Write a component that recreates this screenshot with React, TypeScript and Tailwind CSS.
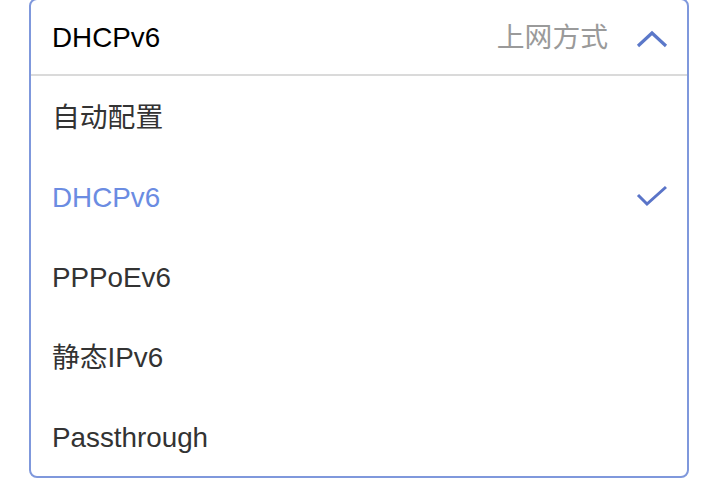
import { useState } from 'react'

const options = ['自动配置', 'DHCPv6', 'PPPoEv6', '静态IPv6', 'Passthrough']

export default function App() {
    const [selected, setSelected] = useState('DHCPv6')

    return (
        <div
            className="w-[702px] h-[484px] bg-white overflow-hidden pl-[29px]"
            style={{ fontFamily: '"Liberation Sans", Arial, "Noto Sans CJK SC", sans-serif' }}
        >
            <div className="w-[660px] -mt-[2px] border-2 border-[#7f98dc] rounded-[8px] bg-white">
                {/* 头部 */}
                <div className="h-[76px] flex items-center justify-between pl-[21px] pr-[19px] pt-[2px] border-b-2 border-[#dadada]">
                    <span className="text-[27.8px] text-black">{selected}</span>
                    <div className="flex items-center gap-[28px]">
                        <span className="text-[27.8px] text-[#9a9a9a]">上网方式</span>
                        <svg width="32" height="18" viewBox="0 0 32 18" className="mt-[1px]">
                            <path d="M2 16 L16 3 L30 16" fill="none" stroke="#5b78c9" strokeWidth="3.2" />
                        </svg>
                    </div>
                </div>

                {/* 选项列表 */}
                {options.map((opt) => (
                    <div
                        key={opt}
                        onClick={() => setSelected(opt)}
                        className="h-[80px] flex items-center justify-between pl-[21px] pr-[19px] pt-[3px] cursor-pointer"
                    >
                        <span className={`text-[27.8px] ${opt === selected ? 'text-[#6b8ce2]' : 'text-[#333333]'}`}>
                            {opt}
                        </span>
                        {opt === selected && (
                            <svg width="32" height="24" viewBox="0 0 32 24" className="-mt-[3px]">
                                <path d="M2 11 L11 20 L30 3" fill="none" stroke="#5a74c8" strokeWidth="3" />
                            </svg>
                        )}
                    </div>
                ))}
            </div>
        </div>
    )
}
